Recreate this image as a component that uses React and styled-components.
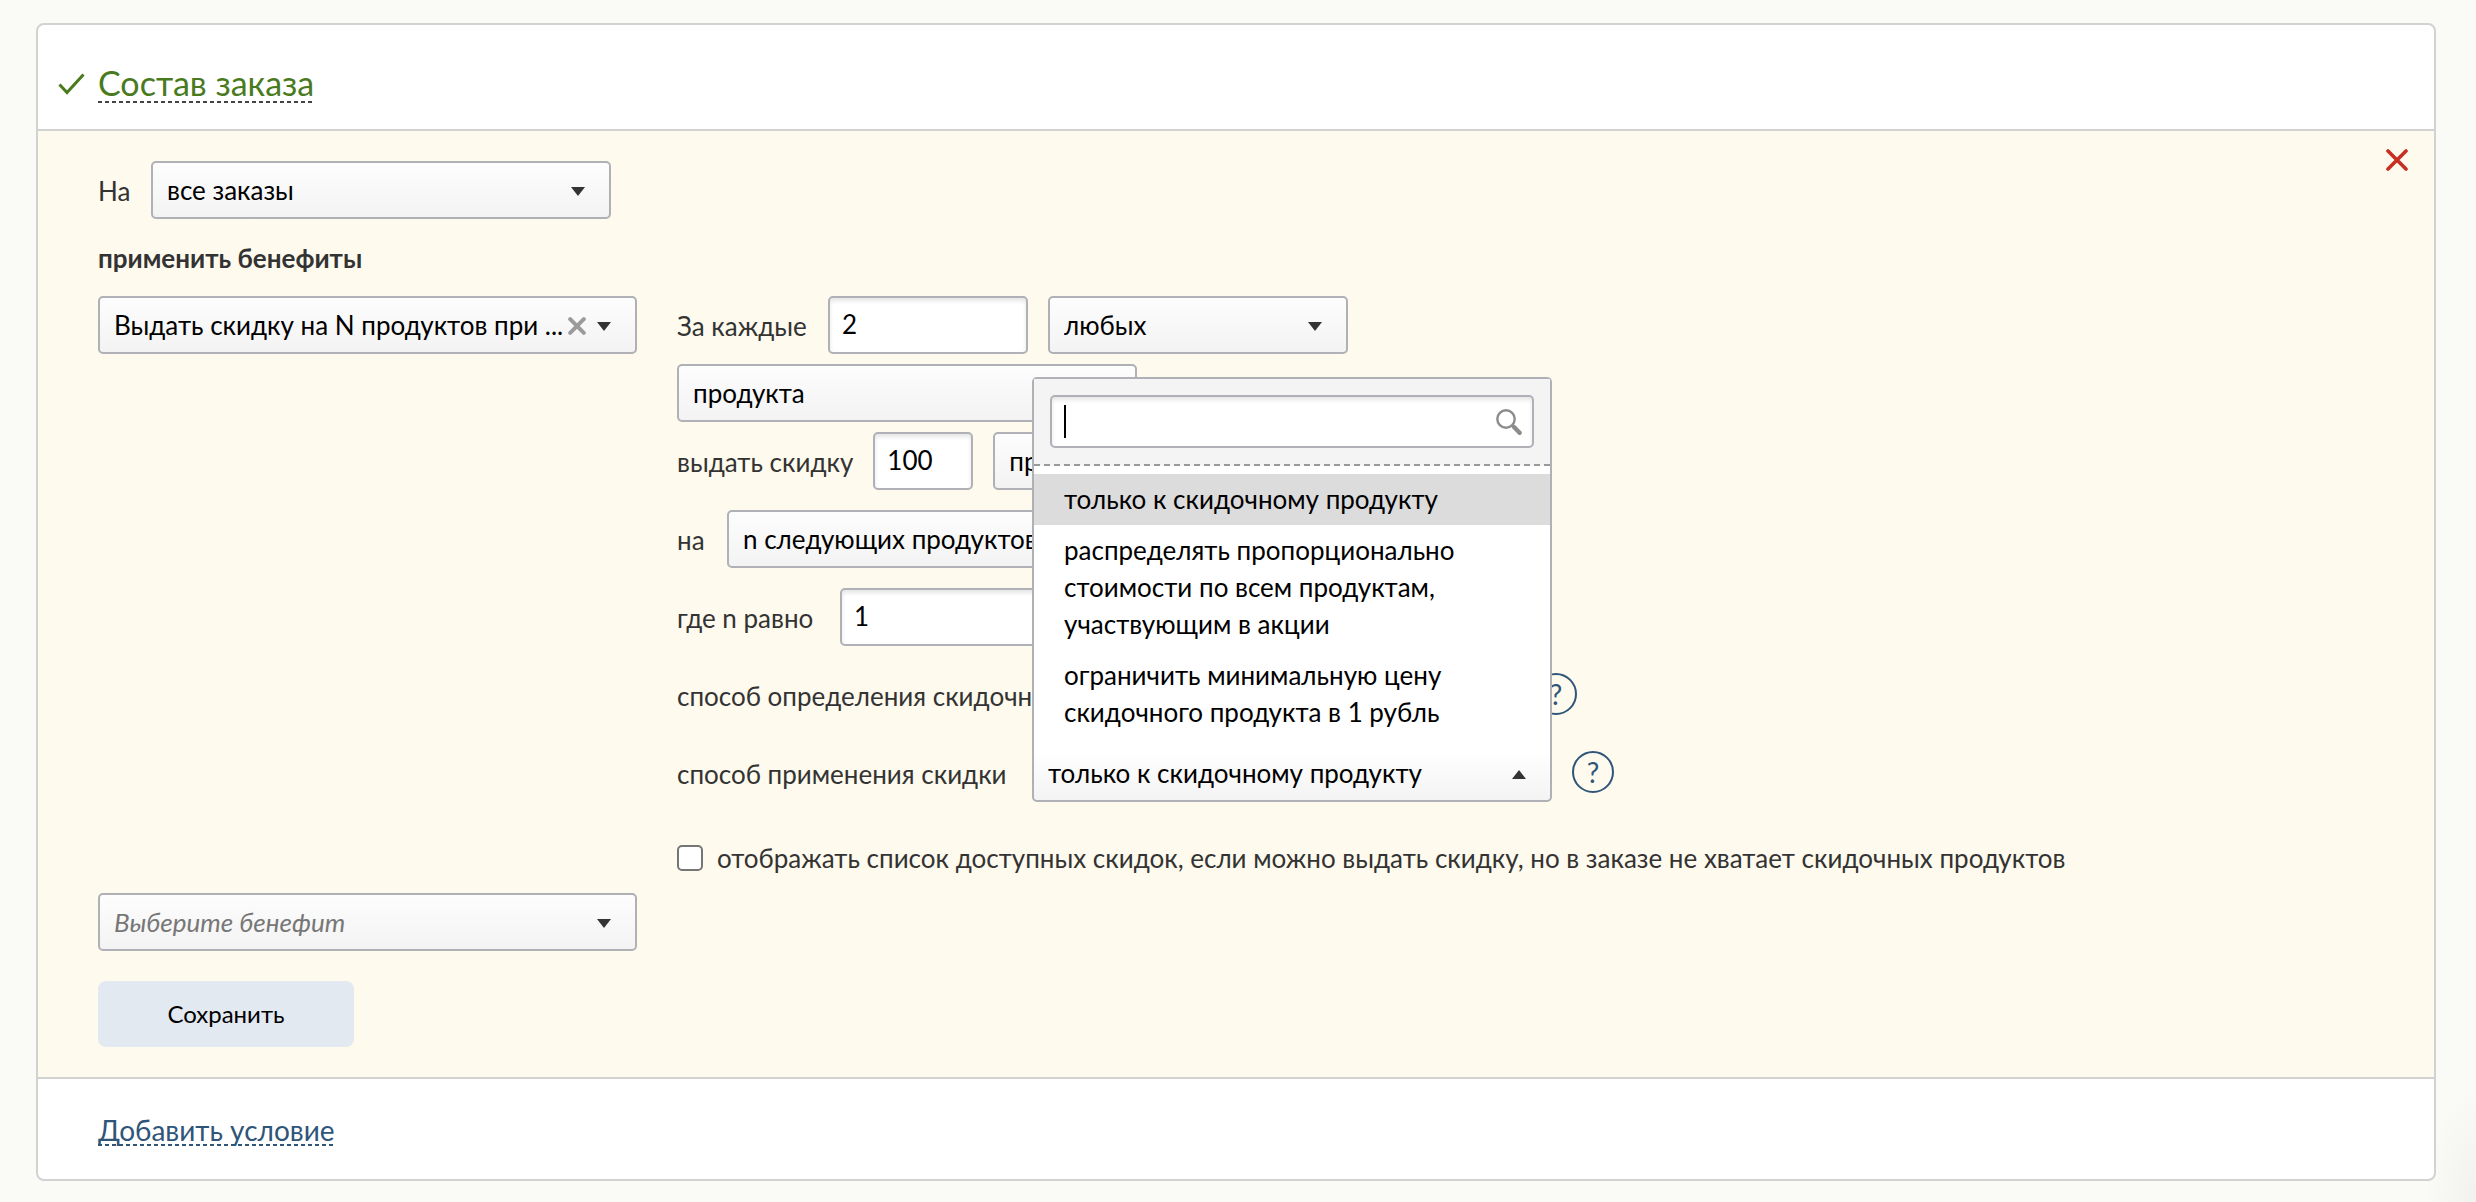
import React, { Component } from 'react';
import styled, { createGlobalStyle, css } from 'styled-components';

const GlobalStyle = createGlobalStyle`
  * {
    box-sizing: border-box;
  }

  body {
    margin: 0;
    min-height: 100vh;
    background: #fafbf6 radial-gradient(50px 120px at 100% 100%, #f1f2ed 0, #fafbf6 100%) no-repeat;
    color: #333;
    font: 26px/37px Lato, 'Open Sans', sans-serif;
  }

  button, input, select {
    font: inherit;
    margin: 0;
  }
`;

const Page = styled.main`
  display: flow-root;
`;

const Card = styled.section`
  margin: 23px 40px 21px 36px;
  background: #fff;
  border: 2px solid #d2d2d2;
  border-radius: 8px;
`;

const Header = styled.header`
  display: flex;
  align-items: center;
  gap: 13px;
  padding: 40px 20px 26px;
  border-bottom: 2px solid #d2d2d2;
`;

const Footer = styled.footer`
  display: flex;
  padding: 37px 60px 33px;
  border-top: 2px solid #d2d2d2;
`;

const DashedLink = styled.a`
  color: ${(p) => p.$color};
  font-size: ${(p) => p.$size}px;
  line-height: ${(p) => p.$line}px;
  text-decoration: none;
  padding-bottom: 2px;
  background: repeating-linear-gradient(
      to right,
      ${(p) => p.$dash} 0 4px,
      transparent 4px 7px
    )
    left bottom / 100% 2px no-repeat;
`;

const Form = styled.form`
  position: relative;
  padding: 30px 60px;
  background: #fefaee;
`;

const Close = styled.button`
  position: absolute;
  top: 18px;
  right: 26px;
  display: flex;
  padding: 0;
  border: none;
  background: none;
  cursor: pointer;
`;

const Row = styled.div`
  display: flex;
  align-items: center;
  gap: 20px;
  min-height: 58px;
  margin-top: ${(p) => p.$top || 0}px;
`;

const Label = styled.label`
  min-width: ${(p) => p.$min || 0}px;
  padding-top: 2px;
  white-space: nowrap;
`;

const Subtitle = styled.h3`
  margin: 21px 0 19px;
  font-size: 26px;
  line-height: 37px;
  font-weight: 700;
`;

const Columns = styled.div`
  display: flex;
  align-items: flex-start;
  gap: 40px;
`;

const Fields = styled.div`
  flex: 1;
`;

const control = css`
  height: 58px;
  border: 2px solid #afb1b6;
  border-radius: 5px;
  color: #000;
  outline: none;
`;

const SelectBox = styled.div`
  position: relative;
  flex: none;
  width: ${(p) => p.$width}px;
`;

const NativeSelect = styled.select`
  ${control}
  display: block;
  width: 100%;
  padding: 0 50px 0 14px;
  appearance: none;
  background: linear-gradient(#fdfdfd, #f3f3f3);
  cursor: pointer;

  ${(p) =>
    p.$clearable &&
    css`
      padding-right: 60px;
    `}
  ${(p) =>
    p.$placeholder &&
    css`
      color: #777;
      font-style: italic;
    `}
  ${(p) =>
    p.$open &&
    css`
      border-top-color: transparent;
      border-radius: 0 0 5px 5px;
      background: linear-gradient(#fff 10%, #f3f3f3) border-box;
    `}
`;

const Arrow = styled.span`
  position: absolute;
  top: 26px;
  right: 26px;
  border: 7px solid transparent;
  border-top: 9px solid #333;
  border-bottom: none;
  pointer-events: none;

  ${(p) =>
    p.$up &&
    css`
      border-top: none;
      border-bottom: 9px solid #333;
    `}
`;

const Clear = styled.button`
  position: absolute;
  top: 21px;
  right: 51px;
  display: flex;
  padding: 0;
  border: none;
  background: none;
  cursor: pointer;
`;

const Input = styled.input`
  ${control}
  flex: none;
  width: ${(p) => p.$width}px;
  padding: 0 12px 2px;
  background: #fff;
  box-shadow: inset 0 3px 4px rgba(0, 0, 0, 0.1);
`;

const Help = styled.button`
  flex: none;
  width: 42px;
  height: 42px;
  margin-bottom: 2px;
  padding: 0;
  border: 2px solid #2f5579;
  border-radius: 50%;
  background: none;
  color: #2f5579;
  font-size: 28px;
  line-height: 38px;
  cursor: pointer;
`;

const CheckRow = styled.div`
  display: flex;
  align-items: center;
  gap: 14px;
  margin: 36px 0 16px;
`;

const Checkbox = styled.input`
  appearance: none;
  flex: none;
  width: 26px;
  height: 26px;
  border: 2px solid #767676;
  border-radius: 5px;
  background: #fff;

  &:checked {
    background: #2f5579;
  }
`;

const Save = styled.button`
  display: block;
  width: 256px;
  height: 66px;
  margin-top: 30px;
  padding: 0 0 2px;
  border: none;
  border-radius: 8px;
  background: #e2e9f0;
  color: #000;
  font-size: 24px;
  cursor: pointer;
`;

const Dropdown = styled.div`
  position: absolute;
  left: 0;
  right: 0;
  bottom: calc(100% - 2px);
  z-index: 1;
  border: 2px solid #afb1b6;
  border-bottom: none;
  border-radius: 5px 5px 0 0;
  background: #fff;
  color: #000;
`;

const Search = styled.div`
  position: relative;
  padding: 16px;
  border-bottom: 2px dashed #999;
  background: #f4f4f4;

  svg {
    position: absolute;
    top: 30px;
    right: 28px;
  }
`;

const SearchInput = styled.input`
  ${control}
  display: block;
  width: 100%;
  height: 53px;
  padding: 0 50px 0 13px;
  background: #fff;
  box-shadow: inset 0 3px 4px rgba(0, 0, 0, 0.1);
  caret-color: transparent;
`;

const Caret = styled.span`
  position: absolute;
  top: 26px;
  left: 30px;
  width: 2px;
  height: 33px;
  background: #000;
`;

const Options = styled.ul`
  list-style: none;
  margin: 0;
  padding: 8px 0;
`;

const Option = styled.li`
  padding: 7px 30px;
  background: ${(p) => (p.$active ? '#dcdcdc' : 'transparent')};
  cursor: pointer;
`;

const CheckIcon = () => (
  <svg width="27" height="22" viewBox="0 0 27 22" fill="none" stroke="#4a7a1e" strokeWidth="3">
    <path d="M1.5 11.5 9 19.5 25.5 1.5" />
  </svg>
);

const CloseIcon = () => (
  <svg width="22" height="22" viewBox="0 0 22 22" stroke="#c62f22" strokeWidth="3.6" strokeLinecap="round">
    <path d="M2 2 20 20M20 2 2 20" />
  </svg>
);

const ClearIcon = () => (
  <svg width="18" height="18" viewBox="0 0 18 18" stroke="#9b9b9b" strokeWidth="4" strokeLinecap="round">
    <path d="M2.2 2.2 15.8 15.8M15.8 2.2 2.2 15.8" />
  </svg>
);

const SearchIcon = () => (
  <svg width="26" height="26" viewBox="0 0 26 26" fill="none" stroke="#8c8c8c">
    <circle cx="10" cy="10" r="8.7" strokeWidth="2.4" />
    <path d="M16 16 18 18" strokeWidth="2.4" />
    <path d="M18 18 23.6 23.8" strokeWidth="4.4" strokeLinecap="round" />
  </svg>
);

const METHODS = [
  'только к скидочному продукту',
  'распределять пропорционально стоимости по всем продуктам, участвующим в акции',
  'ограничить минимальную цену скидочного продукта в 1 рубль',
];

function Select({ id, label, width, options, clearable, placeholder, open, children }) {
  return (
    <SelectBox $width={width}>
      <NativeSelect
        id={id}
        aria-label={label}
        $clearable={clearable}
        $placeholder={placeholder}
        $open={open}
      >
        {options.map((o) => (
          <option key={o}>{o}</option>
        ))}
      </NativeSelect>
      {clearable && (
        <Clear type="button" aria-label="Очистить">
          <ClearIcon />
        </Clear>
      )}
      <Arrow $up={open} />
      {children}
    </SelectBox>
  );
}

class App extends Component {
  constructor(props) {
    super(props);
    this.state = {
      query: '',
      active: 0,
    };
    this.search = this.search.bind(this);
  }

  search(e) {
    this.setState({ query: e.target.value });
  }

  render() {
    const { query, active } = this.state;

    return (
      <Page>
        <GlobalStyle />
        <Card>
          <Header>
            <CheckIcon />
            <DashedLink href="#order" $color="#4a7a1e" $dash="#444" $size={34} $line={36}>
              Состав заказа
            </DashedLink>
          </Header>

          <Form onSubmit={(e) => e.preventDefault()}>
            <Close type="button" aria-label="Удалить">
              <CloseIcon />
            </Close>

            <Row>
              <Label htmlFor="orders" $min={33}>На</Label>
              <Select id="orders" width={460} options={['все заказы']} />
            </Row>

            <Subtitle>применить бенефиты</Subtitle>

            <Columns>
              <Select
                label="Бенефит"
                width={539}
                options={['Выдать скидку на N продуктов при ...']}
                clearable
              />
              <Fields>
                <Row>
                  <Label htmlFor="each" $min={131}>За каждые</Label>
                  <Input id="each" $width={200} defaultValue="2" />
                  <Select label="Каких" width={300} options={['любых']} />
                </Row>
                <Row $top={10}>
                  <Select label="Что считать" width={460} options={['продукта']} />
                </Row>
                <Row $top={10}>
                  <Label htmlFor="discount">выдать скидку</Label>
                  <Input id="discount" $width={100} defaultValue="100" />
                  <Select label="Единица скидки" width={300} options={['процентов']} />
                </Row>
                <Row $top={20}>
                  <Label htmlFor="target" $min={30}>на</Label>
                  <Select id="target" width={460} options={['n следующих продуктов']} />
                </Row>
                <Row $top={20}>
                  <Label htmlFor="count" $min={143}>где n равно</Label>
                  <Input id="count" $width={200} defaultValue="1" />
                </Row>
                <Row $top={20}>
                  <Label htmlFor="pick" $min={538}>способ определения скидочного продукта</Label>
                  <Select id="pick" width={280} options={['по цене']} />
                  <Help type="button">?</Help>
                </Row>
                <Row $top={20}>
                  <Label htmlFor="method" $min={335}>способ применения скидки</Label>
                  <Select id="method" width={520} options={METHODS} open>
                    <Dropdown>
                      <Search>
                        <SearchInput
                          type="text"
                          aria-label="Поиск"
                          value={query}
                          onChange={this.search}
                        />
                        {!query && <Caret />}
                        <SearchIcon />
                      </Search>
                      <Options role="listbox">
                        {METHODS.map((m, i) => (
                          <Option
                            key={m}
                            role="option"
                            aria-selected={i === active}
                            $active={i === active}
                            onMouseEnter={() => this.setState({ active: i })}
                          >
                            {m}
                          </Option>
                        ))}
                      </Options>
                    </Dropdown>
                  </Select>
                  <Help type="button">?</Help>
                </Row>
                <CheckRow>
                  <Checkbox type="checkbox" id="show-list" />
                  <Label htmlFor="show-list">
                    отображать список доступных скидок, если можно выдать скидку, но в заказе не
                    хватает скидочных продуктов
                  </Label>
                </CheckRow>
              </Fields>
            </Columns>

            <Select label="Новый бенефит" width={539} options={['Выберите бенефит']} placeholder />
            <Save type="submit">Сохранить</Save>
          </Form>

          <Footer>
            <DashedLink href="#add" $color="#2f5579" $dash="#2f5579" $size={28} $line={28}>
              Добавить условие
            </DashedLink>
          </Footer>
        </Card>
      </Page>
    );
  }
}

export default App;
